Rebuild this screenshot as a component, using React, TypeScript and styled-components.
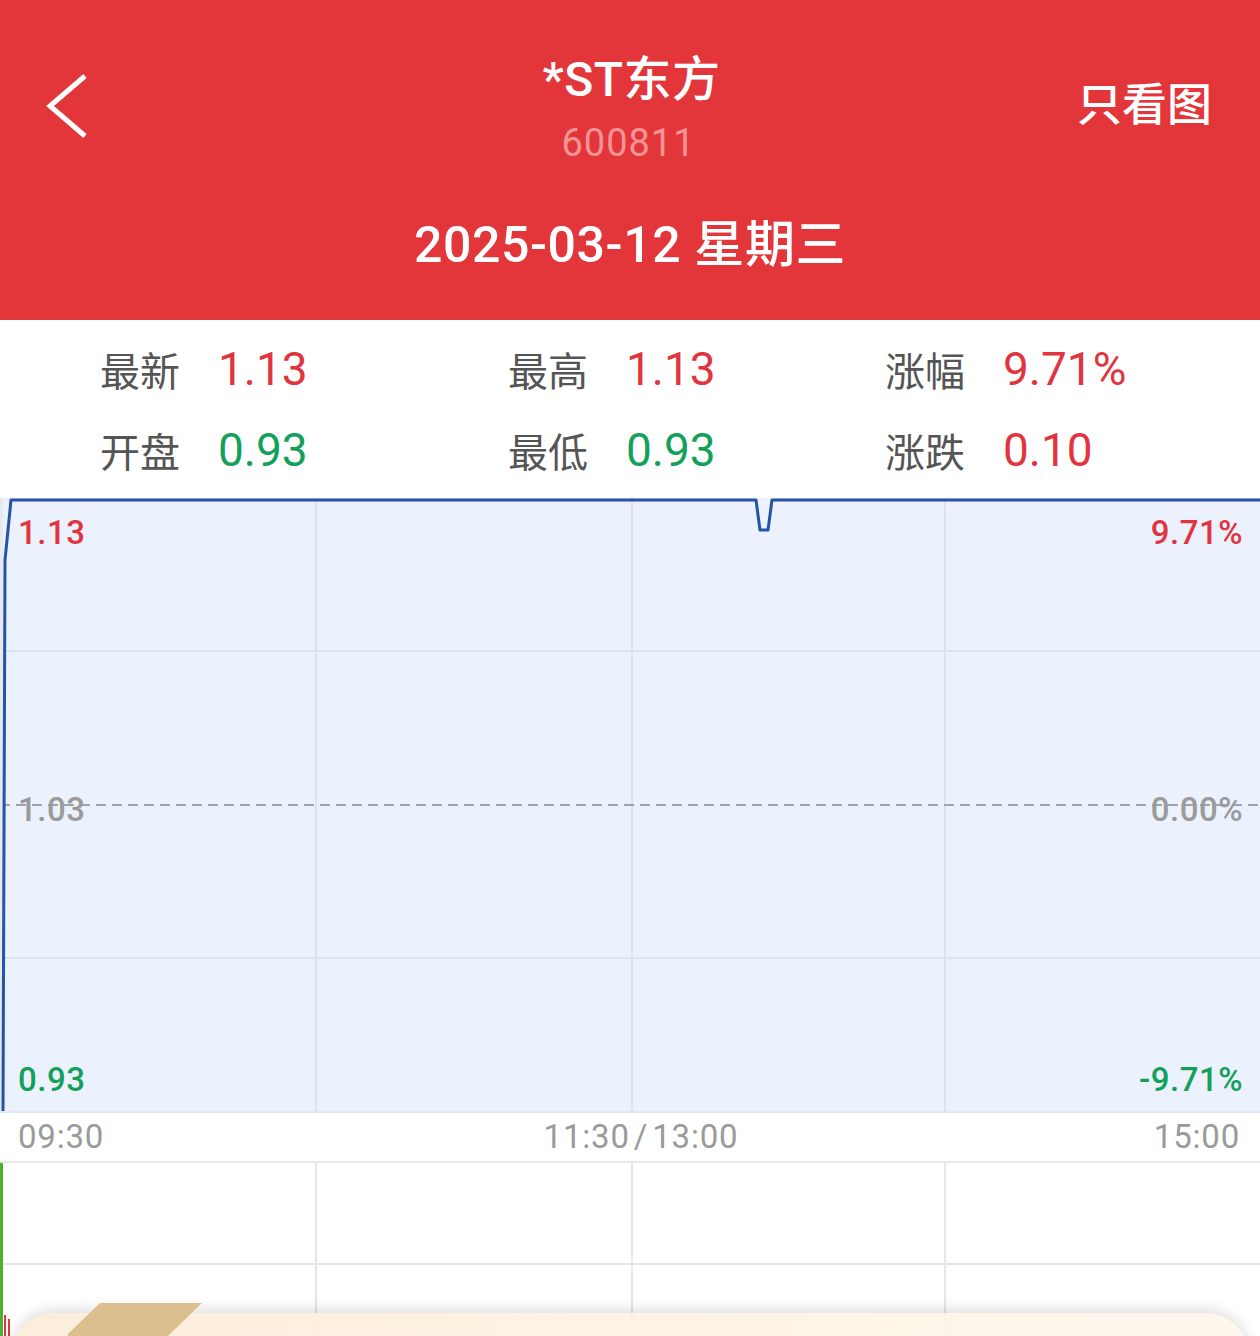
import React from "react";
import styled, { createGlobalStyle } from "styled-components";

const GlobalStyle = createGlobalStyle`
  html, body {
    margin: 0;
    padding: 0;
    background: #ffffff;
  }
  body {
    font-family: Roboto, "Noto Sans CJK SC", "Noto Sans", sans-serif;
  }
`;

const RED = "#e3363a";
const UP = "#e2343f";
const DOWN = "#12a05a";
const GRAY = "#9a9a9a";

const Page = styled.div`
  position: relative;
  width: 1260px;
  height: 1336px;
  overflow: hidden;
  background: #ffffff;
`;

// header
const Header = styled.header`
  height: 320px;
  background: ${RED};
  color: #ffffff;
  display: flex;
  flex-direction: column;
`;

const TopBar = styled.div`
  display: grid;
  grid-template-columns: 1fr auto 1fr;
  align-items: center;
  padding: 50px 48px 0 45px;
`;

const BackButton = styled.button`
  justify-self: start;
  width: 44px;
  height: 66px;
  padding: 0;
  border: 0;
  background: none;
  display: flex;
  margin-top: -6px;
`;

const TitleBlock = styled.div`
  display: flex;
  flex-direction: column;
  align-items: center;
  gap: 8px;
`;

const Title = styled.div`
  font-size: 48px;
  line-height: 60px;
  font-weight: 500;
  letter-spacing: 0.5px;
  margin-left: 6px;
`;

const Code = styled.div`
  font-size: 38px;
  line-height: 50px;
  color: #f59494;
  letter-spacing: 1px;
`;

const Action = styled.div`
  justify-self: end;
  font-size: 45px;
  line-height: 60px;
  font-weight: 500;
  margin-top: -6px;
`;

const DateLine = styled.div`
  margin-top: 47px;
  text-align: center;
  font-size: 50px;
  line-height: 60px;
  font-weight: 500;
  letter-spacing: 0.6px;
`;

// quote stats
const Stats = styled.section`
  height: 178px;
  box-sizing: border-box;
  padding: 8px 0 0 100px;
  display: grid;
  grid-template-columns: 408px 377px auto;
  grid-auto-rows: 81px;
`;

const Stat = styled.div`
  display: flex;
  align-items: center;
  gap: 38px;
`;

const StatLabel = styled.span`
  font-family: "Noto Sans CJK SC", sans-serif;
  font-size: 40px;
  color: #555555;
`;

const StatValue = styled.span<{ $tone: "up" | "down" }>`
  font-size: 46px;
  color: ${({ $tone }) => ($tone === "up" ? UP : DOWN)};
`;

// price chart
const Chart = styled.div`
  position: relative;
  height: 613px;
  background: #ebf2fd;
`;

const ChartSvg = styled.svg`
  position: absolute;
  inset: 0;
`;

const AxisLabels = styled.div`
  position: relative;
  height: 100%;
  box-sizing: border-box;
  padding: 15px 17px 11px 18px;
  display: flex;
  flex-direction: column;
  justify-content: space-between;
`;

const AxisRow = styled.div<{ $shift?: number }>`
  display: flex;
  justify-content: space-between;
  transform: translateY(${({ $shift }) => $shift ?? 0}px);
`;

const AxisText = styled.span<{ $tone: "up" | "down" | "flat" }>`
  font-size: 33px;
  line-height: 40px;
  font-weight: 500;
  letter-spacing: 0.5px;
  color: ${({ $tone }) => ($tone === "up" ? UP : $tone === "down" ? DOWN : GRAY)};
`;

const TimeAxis = styled.div`
  height: 52px;
  box-sizing: border-box;
  border-top: 2px solid #e3e8ef;
  border-bottom: 2px solid #e8e8e8;
  padding: 0 20px 0 18px;
  display: grid;
  grid-template-columns: 1fr auto 1fr;
  align-items: center;
`;

const TimeText = styled.span<{ $align: "start" | "center" | "end" }>`
  justify-self: ${({ $align }) => $align};
  font-size: 33px;
  line-height: 48px;
  letter-spacing: 0.8px;
  color: ${GRAY};
  margin-left: ${({ $align }) => ($align === "center" ? "24px" : "0")};
`;

const Slash = styled.span`
  margin: 0 4px;
`;

// volume chart
const Volume = styled.div`
  position: relative;
  height: 173px;
`;

// promo card peeking at the bottom
const PromoCard = styled.div`
  position: absolute;
  left: 10px;
  right: 10px;
  top: 1313px;
  height: 80px;
  border-radius: 46px 46px 0 0;
  background: linear-gradient(90deg, rgba(252, 236, 216, 0.92), rgba(254, 246, 236, 0.92));
  box-shadow: 0 -4px 14px rgba(0, 0, 0, 0.13);
`;

const PromoTab = styled.div`
  position: absolute;
  top: -10px;
  left: 58px;
  width: 134px;
  height: 60px;
  background: #dcbf8e;
  clip-path: polygon(32px 0, 134px 0, 72px 60px, -30px 60px);
`;

const hLines = [153, 460];
const vLines = [316, 632, 945];

function PriceChart() {
  return (
    <Chart>
      <ChartSvg width="1260" height="613" viewBox="0 0 1260 613">
        {hLines.map((y) => (
          <line key={y} x1="0" x2="1260" y1={y} y2={y} stroke="#dbe3ee" strokeWidth="2" />
        ))}
        {vLines.map((x) => (
          <line key={x} x1={x} x2={x} y1="0" y2="613" stroke="#dbe3ee" strokeWidth="2" />
        ))}
        <line x1="0" x2="1260" y1="307" y2="307" stroke="#9ea3ab" strokeWidth="2" strokeDasharray="10 6" />
        <rect x="0" y="0" width="3" height="613" fill="#e6e9ee" />
        <path
          d="M3 613 L5 62 L11 2 L756 2 L760 32 L768 32 L772 2 L1260 2"
          fill="none"
          stroke="#2553a8"
          strokeWidth="3"
          strokeLinejoin="round"
        />
      </ChartSvg>
      <AxisLabels>
        <AxisRow>
          <AxisText $tone="up">1.13</AxisText>
          <AxisText $tone="up">9.71%</AxisText>
        </AxisRow>
        <AxisRow $shift={3}>
          <AxisText $tone="flat">1.03</AxisText>
          <AxisText $tone="flat">0.00%</AxisText>
        </AxisRow>
        <AxisRow>
          <AxisText $tone="down">0.93</AxisText>
          <AxisText $tone="down">-9.71%</AxisText>
        </AxisRow>
      </AxisLabels>
    </Chart>
  );
}

function VolumeChart() {
  return (
    <Volume>
      <ChartSvg width="1260" height="173" viewBox="0 0 1260 173">
        <line x1="0" x2="1260" y1="101" y2="101" stroke="#e6e6e6" strokeWidth="2" />
        {vLines.map((x) => (
          <line key={x} x1={x} x2={x} y1="0" y2="173" stroke="#e6e6e6" strokeWidth="2" />
        ))}
        <rect x="0" y="0" width="3" height="173" fill="#4cb035" />
        <rect x="4" y="152" width="2" height="21" fill="#e2343f" />
        <rect x="8" y="156" width="2" height="17" fill="#e2343f" />
      </ChartSvg>
    </Volume>
  );
}

export default function App() {
  return (
    <Page>
      <GlobalStyle />
      <Header>
        <TopBar>
          <BackButton aria-label="返回">
            <svg width="44" height="66" viewBox="0 0 44 66">
              <path d="M40 3 L5 33 L40 63" fill="none" stroke="#ffffff" strokeWidth="5" />
            </svg>
          </BackButton>
          <TitleBlock>
            <Title>*ST东方</Title>
            <Code>600811</Code>
          </TitleBlock>
          <Action>只看图</Action>
        </TopBar>
        <DateLine>2025-03-12 星期三</DateLine>
      </Header>

      <Stats>
        <Stat>
          <StatLabel>最新</StatLabel>
          <StatValue $tone="up">1.13</StatValue>
        </Stat>
        <Stat>
          <StatLabel>最高</StatLabel>
          <StatValue $tone="up">1.13</StatValue>
        </Stat>
        <Stat>
          <StatLabel>涨幅</StatLabel>
          <StatValue $tone="up">9.71%</StatValue>
        </Stat>
        <Stat>
          <StatLabel>开盘</StatLabel>
          <StatValue $tone="down">0.93</StatValue>
        </Stat>
        <Stat>
          <StatLabel>最低</StatLabel>
          <StatValue $tone="down">0.93</StatValue>
        </Stat>
        <Stat>
          <StatLabel>涨跌</StatLabel>
          <StatValue $tone="up">0.10</StatValue>
        </Stat>
      </Stats>

      <PriceChart />
      <TimeAxis>
        <TimeText $align="start">09:30</TimeText>
        <TimeText $align="center">
          11:30<Slash>/</Slash>13:00
        </TimeText>
        <TimeText $align="end">15:00</TimeText>
      </TimeAxis>
      <VolumeChart />

      <PromoCard>
        <PromoTab />
      </PromoCard>
    </Page>
  );
}
